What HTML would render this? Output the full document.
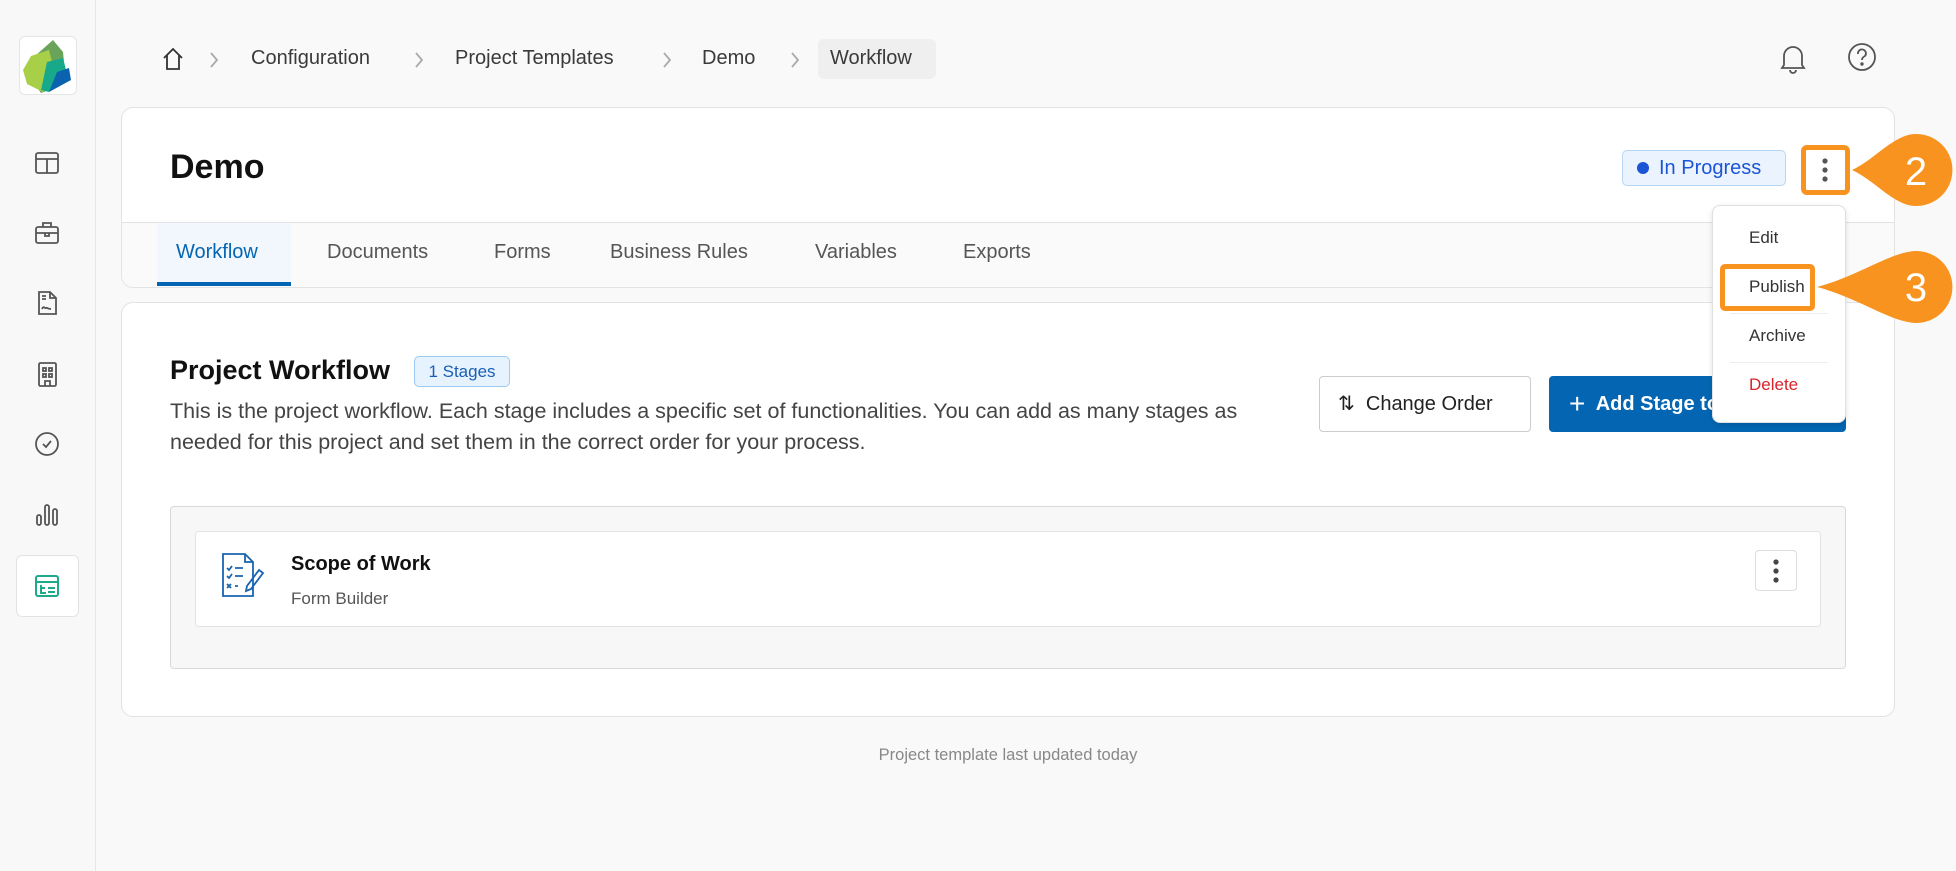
<!DOCTYPE html>
<html><head><meta charset="utf-8"><style>
*{box-sizing:border-box;margin:0;padding:0}
body{width:1956px;height:871px;background:#f9f9f9;font-family:"Liberation Sans",sans-serif;position:relative;overflow:hidden;color:#222}
.a{position:absolute}
.side{left:0;top:0;width:96px;height:871px;border-right:1px solid #e6e6e6;background:#f8f8f8}
.ic{position:absolute;left:34px;width:26px;height:26px}
.bc{top:47px;font-size:20px;color:#3a3a3a}
.chev{top:50px;width:12px;height:20px}
.card{background:#fff;border:1px solid #e3e3e3;border-radius:12px}
.tab{top:241px;font-size:20px;color:#555}
.btn{border-radius:4px;font-size:20px}
</style></head><body>
<div class="a side"></div>
<div class="a" style="left:19px;top:36px;width:58px;height:59px;border:1px solid #e5e5e5;border-radius:6px;background:#fff"></div>
<svg class="a" style="left:19px;top:36px" width="58" height="59" viewBox="0 0 58 59">
<path d="M34 4 L44 16 L46 36 L40 50 L22 57 L10 40 L16 20Z" fill="#6aa35a"/>
<path d="M12 20 L30 14 L34 30 L24 56 L8 48 L4 34Z" fill="#a8cf48"/>
<path d="M28 26 L44 22 L48 38 L30 56 L22 54Z" fill="#18a88a"/>
<path d="M38 36 L50 32 L52 44 L30 56Z" fill="#0b63b0"/>
</svg>
<svg class="ic" style="top:150px" viewBox="0 0 26 26" fill="none" stroke="#555" stroke-width="1.8"><rect x="2" y="3" width="22" height="20" rx="2"/><path d="M2 9h22M13 9v14"/></svg>
<svg class="ic" style="top:220px" viewBox="0 0 26 26" fill="none" stroke="#555" stroke-width="1.8"><rect x="2" y="7" width="22" height="16" rx="2"/><path d="M9 7V3h8v4M2 13h22M11 13v3h4v-3"/></svg>
<svg class="ic" style="top:290px" viewBox="0 0 26 26" fill="none" stroke="#555" stroke-width="1.8"><path d="M5 2h11l6 6v16H5z M16 2v6h6 M8 6h4M8 9h4M8 19c2-4 3 0 4-1s1 1 5 1"/></svg>
<svg class="ic" style="top:361px" viewBox="0 0 26 26" fill="none" stroke="#555" stroke-width="1.8"><rect x="5" y="2" width="17" height="23" rx="1.5"/><rect x="9" y="7" width="3" height="3"/><rect x="15" y="7" width="3" height="3"/><rect x="9" y="13" width="3" height="3"/><rect x="15" y="13" width="3" height="3"/><path d="M11 25v-5h5v5"/></svg>
<svg class="ic" style="top:431px" viewBox="0 0 26 26" fill="none" stroke="#555" stroke-width="1.8"><circle cx="13" cy="13" r="11"/><path d="M9 13l3 3 5-6"/></svg>
<svg class="ic" style="top:501px" viewBox="0 0 26 26" fill="none" stroke="#555" stroke-width="1.8"><rect x="3" y="14" width="4" height="10" rx="2"/><rect x="11" y="4" width="4" height="20" rx="2"/><rect x="19" y="8" width="4" height="16" rx="2"/></svg>
<div class="a" style="left:16px;top:555px;width:63px;height:62px;background:#fff;border:1px solid #e3e3e3;border-radius:6px"></div>
<svg class="ic" style="top:573px" viewBox="0 0 26 26" fill="none" stroke="#1ea98a" stroke-width="2"><rect x="2" y="3" width="22" height="20" rx="2"/><path d="M2 9h22M7 12v8h5M14 15h7M14 19h7M7 15h4"/></svg>

<svg class="a" style="left:161px;top:46px" width="24" height="26" viewBox="0 0 24 26" fill="none" stroke="#333" stroke-width="1.8"><path d="M3 12L12 3l9 9M6 9v14h12V9"/></svg>
<svg class="a chev" style="left:208px" viewBox="0 0 12 20" fill="none" stroke="#aaa" stroke-width="1.8"><path d="M3 3l6 7-6 7"/></svg>
<span class="a bc" style="left:251px">Configuration</span>
<svg class="a chev" style="left:413px" viewBox="0 0 12 20" fill="none" stroke="#aaa" stroke-width="1.8"><path d="M3 3l6 7-6 7"/></svg>
<span class="a bc" style="left:455px">Project Templates</span>
<svg class="a chev" style="left:661px" viewBox="0 0 12 20" fill="none" stroke="#aaa" stroke-width="1.8"><path d="M3 3l6 7-6 7"/></svg>
<span class="a bc" style="left:702px">Demo</span>
<svg class="a chev" style="left:789px" viewBox="0 0 12 20" fill="none" stroke="#aaa" stroke-width="1.8"><path d="M3 3l6 7-6 7"/></svg>
<div class="a" style="left:818px;top:39px;width:118px;height:40px;background:#efefef;border-radius:6px"></div>
<span class="a bc" style="left:830px">Workflow</span>
<svg class="a" style="left:1779px;top:42px" width="28" height="32" viewBox="0 0 28 32" fill="none" stroke="#555" stroke-width="1.8"><path d="M5 23V14a9 9 0 0118 0v9l2 3H3z M11 28a3 3 0 006 0"/></svg>
<svg class="a" style="left:1847px;top:42px" width="30" height="30" viewBox="0 0 30 30" fill="none" stroke="#555" stroke-width="1.8"><circle cx="15" cy="15" r="13"/><path d="M11 12a4 4 0 117 2c-2 1-3 2-3 4"/><circle cx="15" cy="22" r=".8" fill="#555"/></svg>

<div class="a card" style="left:121px;top:107px;width:1774px;height:181px"></div>
<div class="a" style="left:122px;top:222px;width:1772px;height:65px;background:#fafafa;border-top:1px solid #e3e3e3;border-radius:0 0 12px 12px"></div>
<div class="a" style="left:170px;top:148px;font-size:34px;font-weight:bold;color:#111">Demo</div>
<div class="a" style="left:157px;top:223px;width:134px;height:63px;background:#f1f7fd;border-bottom:4px solid #0466b3"></div>
<span class="a tab" style="left:176px;color:#0466b3">Workflow</span>
<span class="a tab" style="left:327px">Documents</span>
<span class="a tab" style="left:494px">Forms</span>
<span class="a tab" style="left:610px">Business Rules</span>
<span class="a tab" style="left:815px">Variables</span>
<span class="a tab" style="left:963px">Exports</span>
<div class="a" style="left:1622px;top:150px;width:164px;height:36px;background:#ebf4fe;border:1px solid #b6d6f6;border-radius:5px;color:#1b55d6;font-size:20px;line-height:34px;padding-left:14px"><span style="display:inline-block;width:12px;height:12px;border-radius:50%;background:#1b55d6;margin-right:10px"></span>In Progress</div>

<div class="a card" style="left:121px;top:302px;width:1774px;height:415px"></div>
<div class="a" style="left:170px;top:355px;font-size:27px;font-weight:bold;color:#111">Project Workflow</div>
<div class="a" style="left:414px;top:356px;width:96px;height:31px;background:#e6f2fd;border:1px solid #9ccaf3;border-radius:5px;color:#1a5fb4;font-size:17px;line-height:29px;text-align:center">1 Stages</div>
<div class="a" style="left:170px;top:396px;width:1100px;font-size:21.5px;line-height:31px;color:#444">This is the project workflow. Each stage includes a specific set of functionalities. You can add as many stages as needed for this project and set them in the correct order for your process.</div>
<div class="a btn" style="left:1319px;top:376px;width:212px;height:56px;border:1px solid #ccc;background:#fff;line-height:54px;padding-left:18px;color:#222">⇅&nbsp; Change Order</div>
<div class="a btn" style="left:1549px;top:376px;width:297px;height:56px;background:#0466b3;color:#fff;font-weight:bold;line-height:56px;padding-left:20px;white-space:nowrap;overflow:hidden"><span style="font-weight:normal;font-size:28px;vertical-align:-3px">+</span>&nbsp; Add Stage to Workflow</div>

<div class="a" style="left:170px;top:506px;width:1676px;height:163px;background:#f7f7f7;border:1px solid #d9d9d9;border-radius:4px"></div>
<div class="a" style="left:195px;top:531px;width:1626px;height:96px;background:#fff;border:1px solid #e3e3e3;border-radius:4px"></div>
<svg class="a" style="left:221px;top:552px" width="46" height="46" viewBox="0 0 46 46" fill="none" stroke="#1a64b0" stroke-width="1.8"><path d="M2 2h22l8 8v34H2z M24 2v8h8 M6 16l2 2 3-4M14 16h8M6 24l2 2 3-4M14 24h8M6 32l4 4M10 32l-4 4M14 34h3 M38 18l4 3-12 16-5 2 1-5z"/></svg>
<div class="a" style="left:291px;top:553px;font-size:20px;font-weight:bold;color:#111">Scope of Work</div>
<div class="a" style="left:291px;top:589px;font-size:17px;color:#555">Form Builder</div>
<div class="a" style="left:1755px;top:550px;width:42px;height:41px;border:1px solid #ddd;border-radius:4px;background:#fff"></div>
<svg class="a" style="left:1771px;top:557px" width="10" height="28"><circle cx="5" cy="5" r="2.6" fill="#444"/><circle cx="5" cy="14" r="2.6" fill="#444"/><circle cx="5" cy="23" r="2.6" fill="#444"/></svg>

<div class="a" style="left:0;top:746px;width:2016px;text-align:center;font-size:16.5px;color:#888">Project template last updated today</div>

<div class="a" style="left:1801px;top:145px;width:49px;height:50px;border:5px solid #f7931e;border-radius:6px;background:#fff"></div>
<svg class="a" style="left:1820px;top:156px" width="10" height="28"><circle cx="5" cy="5" r="2.6" fill="#555"/><circle cx="5" cy="14" r="2.6" fill="#555"/><circle cx="5" cy="23" r="2.6" fill="#555"/></svg>
<svg class="a" style="left:1850px;top:125px" width="106" height="100" viewBox="0 0 106 100"><path d="M2 45 C22 36 38 16 58 10 A36 36 0 1 1 58 80 C38 74 22 54 2 45Z" fill="#f7931e"/><text x="66" y="60" font-family="Liberation Sans,sans-serif" font-size="40" fill="#fff" text-anchor="middle">2</text></svg>

<div class="a" style="left:1712px;top:205px;width:134px;height:218px;background:#fff;border:1px solid #e0e0e0;border-radius:8px;box-shadow:0 2px 6px rgba(0,0,0,.12)"></div>
<div class="a" style="left:1749px;top:228px;font-size:17px;color:#333">Edit</div>
<div class="a" style="left:1720px;top:264px;width:95px;height:47px;border:5px solid #f7931e;border-radius:5px;background:#fff"></div>
<div class="a" style="left:1749px;top:277px;font-size:17px;color:#333">Publish</div>
<div class="a" style="left:1730px;top:313px;width:98px;border-top:1px solid #eee"></div>
<div class="a" style="left:1749px;top:326px;font-size:17px;color:#333">Archive</div>
<div class="a" style="left:1730px;top:362px;width:98px;border-top:1px solid #eee"></div>
<div class="a" style="left:1749px;top:375px;font-size:17px;color:#d9232a">Delete</div>
<svg class="a" style="left:1815px;top:239px" width="141" height="100" viewBox="0 0 141 100"><path d="M2 48 C40 38 70 17 93 13 A36 36 0 1 1 93 83 C70 79 40 58 2 48Z" fill="#f7931e"/><text x="101" y="62" font-family="Liberation Sans,sans-serif" font-size="40" fill="#fff" text-anchor="middle">3</text></svg>
</body></html>
